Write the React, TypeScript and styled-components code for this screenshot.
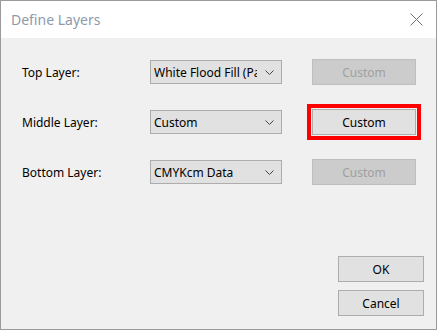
import styled, { createGlobalStyle } from 'styled-components';

const GlobalStyle = createGlobalStyle`
  html, body {
    margin: 0;
    padding: 0;
    background: #ffffff;
  }
  body {
    font-family: "Noto Sans", "Liberation Sans", sans-serif;
  }
`;

const Window = styled.div`
  width: 437px;
  height: 330px;
  box-sizing: border-box;
  border: 1px solid #9b9b9b;
  display: flex;
  flex-direction: column;
  background: #f0f0f0;
`;

const TitleBar = styled.div`
  height: 37px;
  background: #ffffff;
  display: flex;
  align-items: center;
  justify-content: space-between;
  padding: 0 13px 0 10px;
`;

const Title = styled.span`
  font-size: 14px;
  color: #8e9aab;
  margin-top: -1px;
`;

const CloseButton = styled.div`
  width: 14px;
  height: 14px;
  display: flex;
  align-items: center;
  justify-content: center;
`;

const Body = styled.div`
  flex: 1;
  display: flex;
  flex-direction: column;
  padding: 21px 12px 13px 21px;
`;

const Rows = styled.div`
  display: flex;
  flex-direction: column;
  gap: 24px;
`;

const Row = styled.div`
  display: flex;
  align-items: center;
  height: 26px;
`;

const Label = styled.span`
  width: 128px;
  font-size: 12px;
  color: #000;
`;

const Combo = styled.div`
  width: 132px;
  height: 24px;
  box-sizing: border-box;
  border: 1px solid #adadad;
  background: #e1e1e1;
  display: flex;
  align-items: center;
  padding: 0 7px 0 3px;
  font-size: 12px;
  color: #000;
`;

const ComboText = styled.span`
  flex: 1;
  overflow: hidden;
  white-space: nowrap;
  margin-right: 8px;
`;

const Button = styled.div<{ $disabled?: boolean; $highlight?: boolean }>`
  width: 104px;
  height: 26px;
  box-sizing: border-box;
  border: 1px solid ${p => (p.$disabled ? '#bfbfbf' : '#adadad')};
  background: ${p => (p.$disabled ? '#cccccc' : '#e1e1e1')};
  color: ${p => (p.$disabled ? '#a0a0a0' : '#000')};
  font-size: 12px;
  display: flex;
  align-items: center;
  justify-content: center;
  ${p => p.$highlight && `
    outline: 4px solid #ff0000;
    outline-offset: 1px;
  `}
`;

const RowButton = styled(Button)`
  margin-left: 30px;
`;

const Footer = styled.div`
  margin-top: auto;
  display: flex;
  flex-direction: column;
  align-items: flex-end;
  gap: 8px;
`;

const FooterButton = styled(Button)`
  width: 86px;
`;

const Chevron = () => (
  <svg width="9" height="5" viewBox="0 0 9 5">
    <path d="M0.5 0.5 L4.5 4.5 L8.5 0.5" fill="none" stroke="#444" strokeWidth="1" />
  </svg>
);

const layers = [
  { label: 'Top Layer:', value: 'White Flood Fill (Paint)', enabled: false },
  { label: 'Middle Layer:', value: 'Custom', enabled: true },
  { label: 'Bottom Layer:', value: 'CMYKcm Data', enabled: false },
];

export default function App() {
  return (
    <>
      <GlobalStyle />
      <Window>
        <TitleBar>
          <Title>Define Layers</Title>
          <CloseButton>
            <svg width="13" height="13" viewBox="0 0 13 13">
              <path d="M0.5 0.5 L12.5 12.5 M12.5 0.5 L0.5 12.5" stroke="#6f6f6f" strokeWidth="1" />
            </svg>
          </CloseButton>
        </TitleBar>
        <Body>
          <Rows>
            {layers.map(layer => (
              <Row key={layer.label}>
                <Label>{layer.label}</Label>
                <Combo>
                  <ComboText>{layer.value}</ComboText>
                  <Chevron />
                </Combo>
                <RowButton $disabled={!layer.enabled} $highlight={layer.enabled}>
                  Custom
                </RowButton>
              </Row>
            ))}
          </Rows>
          <Footer>
            <FooterButton>OK</FooterButton>
            <FooterButton>Cancel</FooterButton>
          </Footer>
        </Body>
      </Window>
    </>
  );
}
